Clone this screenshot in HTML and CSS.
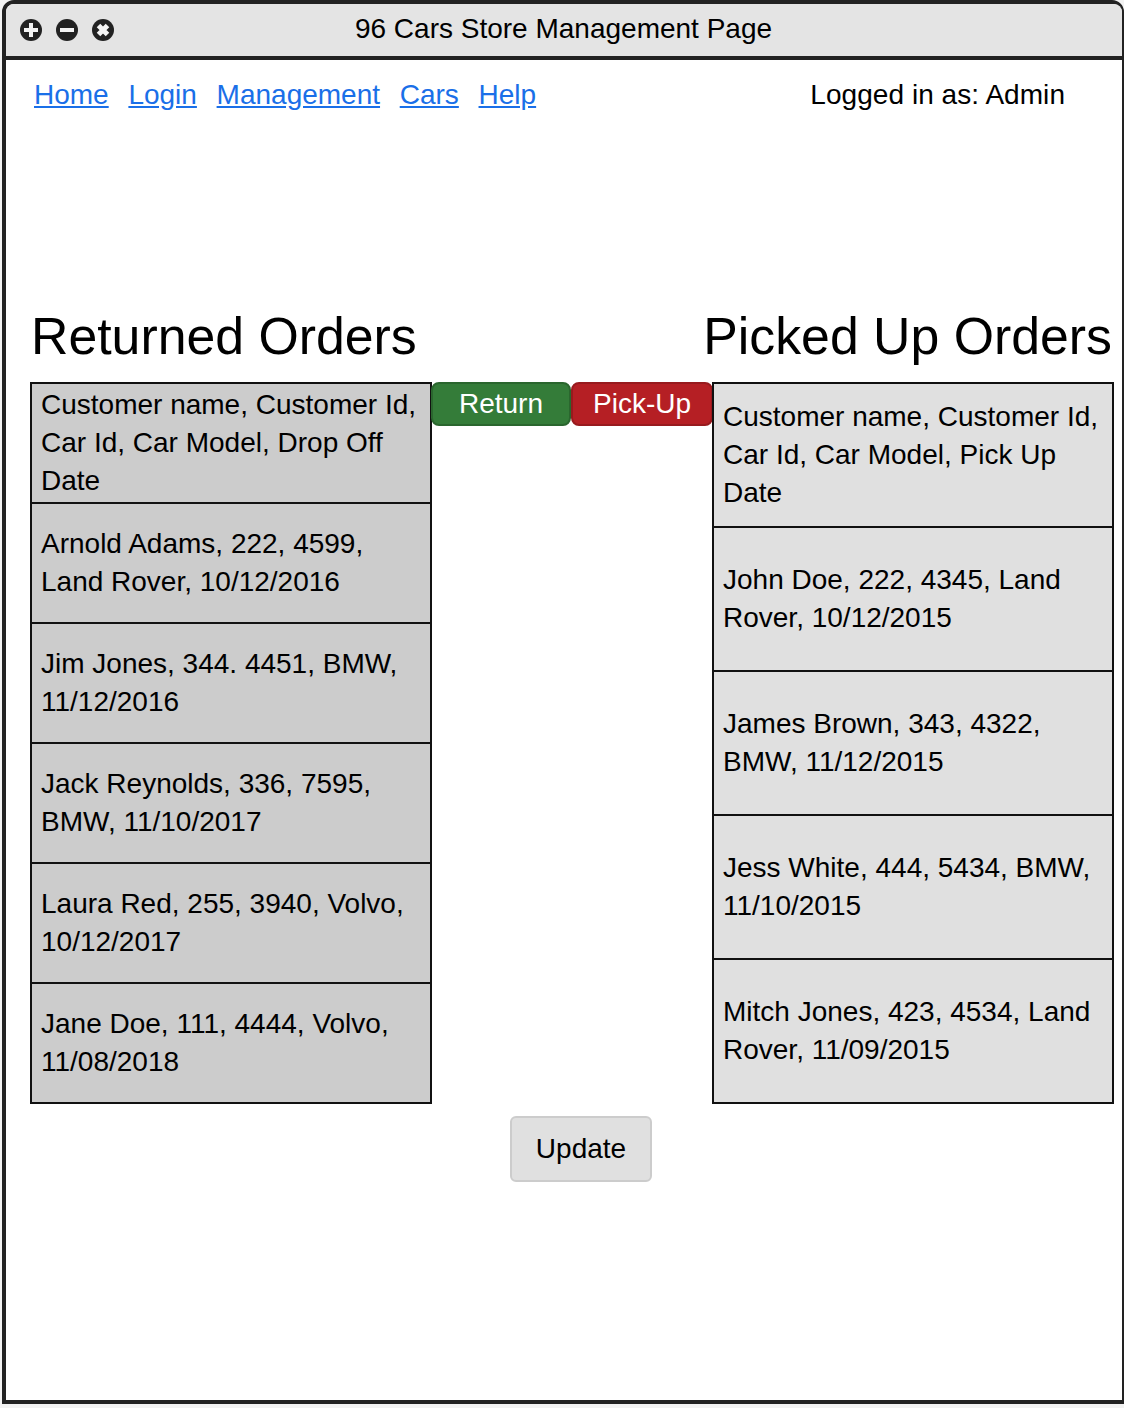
FILE: index.html
```html
<!DOCTYPE html>
<html lang="en">

<head>
    <meta charset="UTF-8">
    <title>96 Cars Store Management Page</title>
    <link rel="stylesheet" href="styles.css">
</head>

<body>
    <div class="window">
        <header class="titlebar">
            <div class="controls">
                <svg class="control" viewBox="0 0 22 22" aria-hidden="true">
                    <circle cx="11" cy="11" r="11" />
                    <path class="mark" d="M4 11h14M11 4v14" />
                </svg>
                <svg class="control" viewBox="0 0 22 22" aria-hidden="true">
                    <circle cx="11" cy="11" r="11" />
                    <path class="mark" d="M4 11h14" />
                </svg>
                <svg class="control" viewBox="0 0 22 22" aria-hidden="true">
                    <circle cx="11" cy="11" r="11" />
                    <path class="mark mark-close" d="M6.5 6.5l9 9M15.5 6.5l-9 9" />
                </svg>
            </div>
            <div class="title">96 Cars Store Management Page</div>
        </header>

        <nav class="nav">
            <div class="nav-links">
                <a href="#">Home</a>
                <a href="#">Login</a>
                <a href="#">Management</a>
                <a href="#">Cars</a>
                <a href="#">Help</a>
            </div>
            <div class="user">Logged in as: Admin</div>
        </nav>

        <main class="orders">
            <div class="headings">
                <h1>Returned Orders</h1>
                <h1>Picked Up Orders</h1>
            </div>

            <div class="columns">
                <div class="list list-returned">
                    <div class="row row-head">Customer name, Customer Id, Car Id, Car Model, Drop Off Date</div>
                    <div class="row">Arnold Adams, 222, 4599, Land Rover, 10/12/2016</div>
                    <div class="row">Jim Jones, 344. 4451, BMW, 11/12/2016</div>
                    <div class="row">Jack Reynolds, 336, 7595, BMW, 11/10/2017</div>
                    <div class="row">Laura Red, 255, 3940, Volvo, 10/12/2017</div>
                    <div class="row">Jane Doe, 111, 4444, Volvo, 11/08/2018</div>
                </div>

                <div class="actions">
                    <button class="btn-return" type="button">Return</button>
                    <button class="btn-pickup" type="button">Pick-Up</button>
                </div>

                <div class="list list-picked">
                    <div class="row">Customer name, Customer Id, Car Id, Car Model, Pick Up Date</div>
                    <div class="row">John Doe, 222, 4345, Land Rover, 10/12/2015</div>
                    <div class="row">James Brown, 343, 4322, BMW, 11/12/2015</div>
                    <div class="row">Jess White, 444, 5434, BMW, 11/10/2015</div>
                    <div class="row">Mitch Jones, 423, 4534, Land Rover, 11/09/2015</div>
                </div>
            </div>

            <div class="update">
                <button class="btn-update" type="button">Update</button>
            </div>
        </main>
    </div>
</body>

</html>
```

FILE: styles.css
```css
html {
    background-color: #f2f2f2;
}

body {
    margin: 0;
    padding-left: 2px;
    font-family: "Liberation Sans", Arial, sans-serif;
    font-size: 28px;
    color: #000000;
}

.window {
    box-sizing: border-box;
    height: 1404px;
    background-color: #ffffff;
    border-style: solid;
    border-color: #222222;
    border-width: 4px 2px 4px 4px;
    border-radius: 12px 12px 0 0;
}

.titlebar {
    display: grid;
    grid-template-columns: 1fr auto 1fr;
    align-items: center;
    box-sizing: border-box;
    height: 52px;
    padding-left: 14px;
    padding-bottom: 2px;
    background-color: #e4e4e4;
    border-radius: 8px 8px 0 0;
    font-size: 28px;
}

.controls {
    display: flex;
    gap: 14px;
    margin-top: 2px;
}

.control {
    width: 22px;
    height: 22px;
}

.control circle {
    fill: #222222;
}

.control .mark {
    fill: none;
    stroke: #f4f4f4;
    stroke-width: 4;
}

.control .mark-close {
    stroke-width: 5;
}

.title {
    margin-left: -15px;
}

.nav {
    display: flex;
    justify-content: space-between;
    padding: 16px 57px 0 28px;
    border-top: 4px solid #222222;
    line-height: 38px;
}

.nav-links {
    display: flex;
    gap: 19.7px;
}

.nav-links a {
    color: #1a6fe8;
}

.user {
    letter-spacing: 0.05px;
}

.orders {
    padding: 192px 8px 0 24px;
}

.headings {
    display: flex;
    justify-content: space-between;
    padding: 0 2px 0 1px;
}

h1 {
    margin: 0 0 16px 0;
    font-size: 51.8px;
    font-weight: normal;
    line-height: 60px;
}

.columns {
    display: grid;
    grid-template-columns: 402px 280px 402px;
    align-items: start;
}

.list {
    box-sizing: border-box;
    border: 2px solid #111111;
    line-height: 38px;
}

.list-returned {
    background-color: #cccccc;
}

.list-picked {
    background-color: #e0e0e0;
}

.row {
    display: flex;
    align-items: center;
    box-sizing: border-box;
    padding: 0 10px 0 9px;
    border-bottom: 2px solid #111111;
}

.row:last-child {
    border-bottom: none;
}

.list-returned .row {
    height: 120px;
}

.list-returned .row:last-child {
    height: 118px;
}

.list-picked .row {
    height: 144px;
}

.list-picked .row:last-child {
    height: 142px;
}

.actions {
    display: flex;
    margin-left: -1px;
}

.actions button {
    flex: none;
    box-sizing: border-box;
    height: 44px;
    padding: 0;
    border: 2px solid #2a662e;
    border-radius: 8px;
    color: #ffffff;
    font-family: inherit;
    font-size: 28px;
}

.actions .btn-return {
    width: 140px;
    background-color: #347c39;
    border-color: #2a662e;
}

.actions .btn-pickup {
    width: 142px;
    background-color: #b51f24;
    border-color: #981a1e;
}

.update {
    display: flex;
    justify-content: center;
    padding-top: 12px;
}

.btn-update {
    box-sizing: border-box;
    width: 142px;
    height: 66px;
    margin-left: 18px;
    padding: 0;
    border: 2px solid #cccccc;
    border-radius: 6px;
    background-color: #e0e0e0;
    color: #000000;
    font-family: inherit;
    font-size: 28px;
}
```
